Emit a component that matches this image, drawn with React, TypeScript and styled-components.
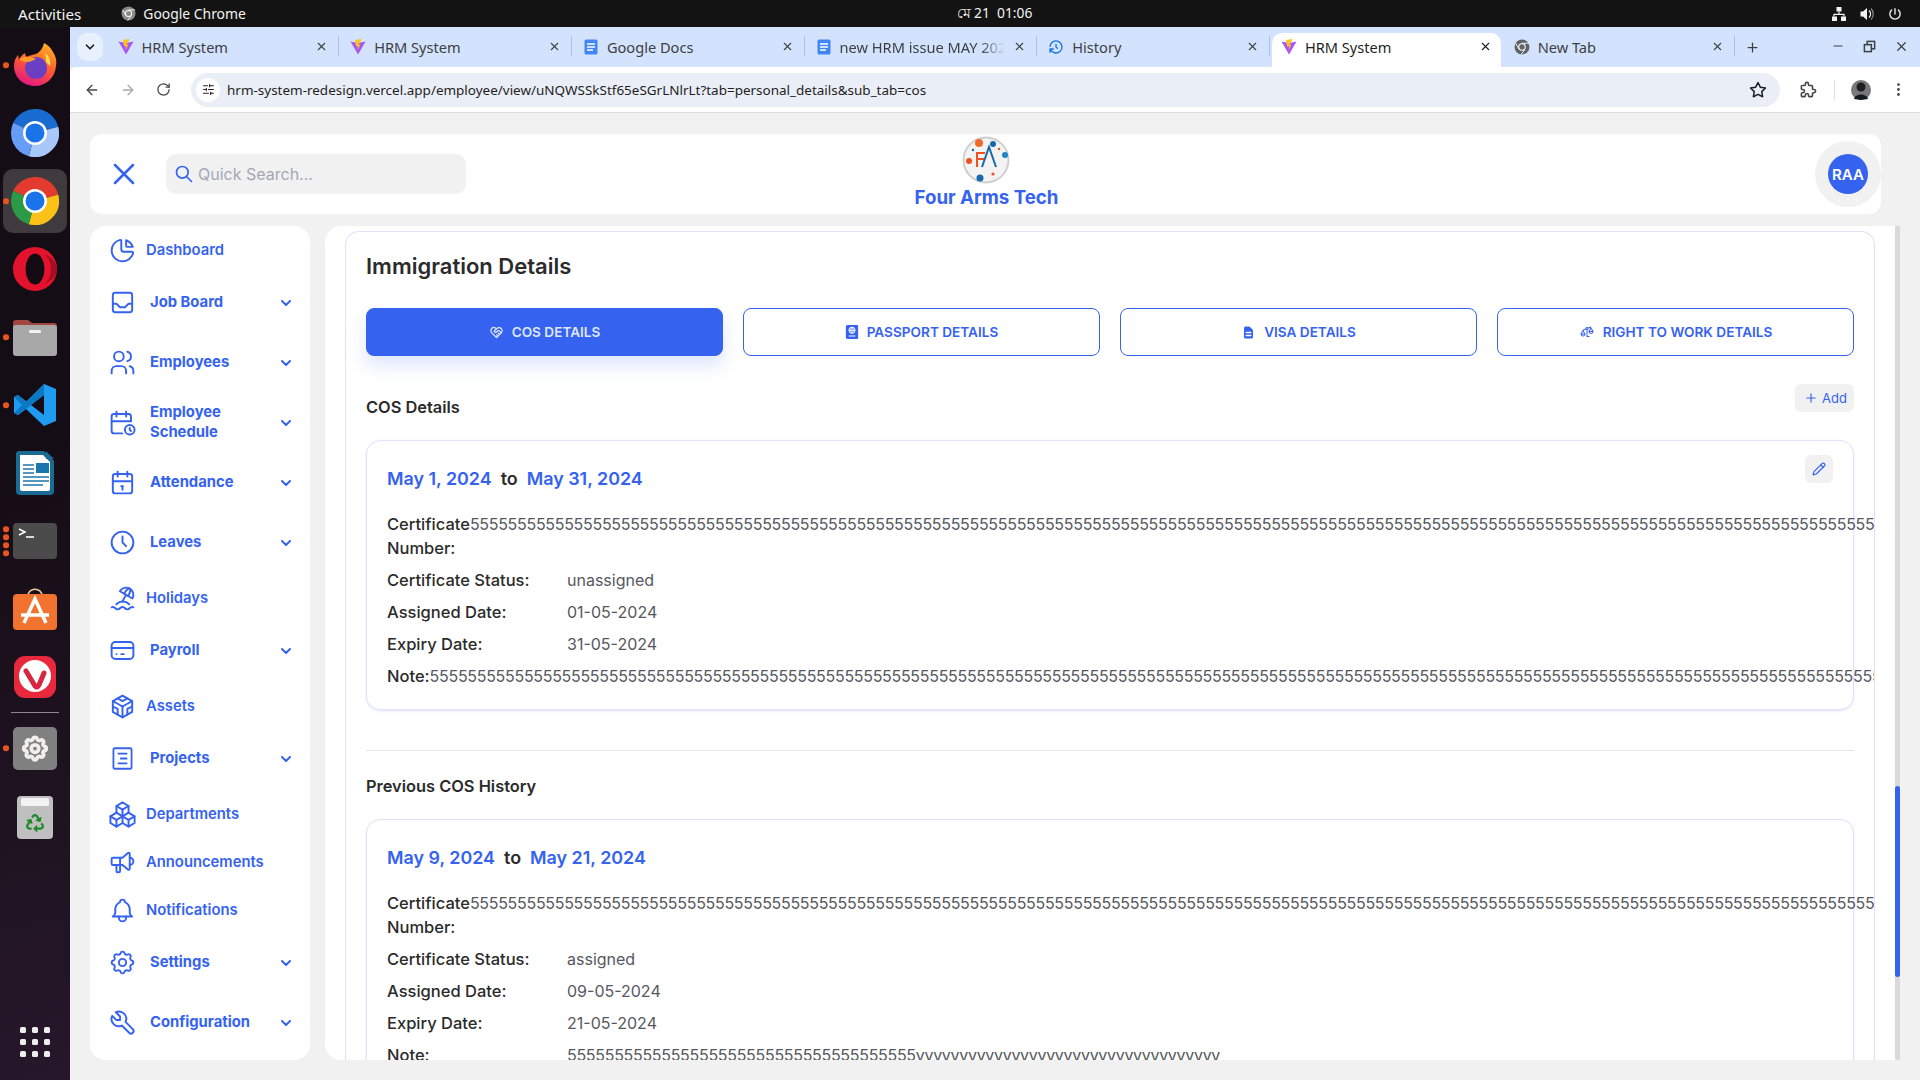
import React from 'react';
import styled, { createGlobalStyle } from 'styled-components';
import {
  TbChartPie,
  TbInbox,
  TbUsers,
  TbCalendarTime,
  TbCalendar,
  TbClock,
  TbBeach,
  TbCreditCard,
  TbBrandCodesandbox,
  TbPackages,
  TbSpeakerphone,
  TbBell,
  TbSettings,
  TbTool,
  TbSearch,
  TbHeartHandshake,
  TbPuzzle,
  TbStar,
  TbHistory,
  TbPower,
} from 'react-icons/tb';
import { FaPassport, FaRecycle } from 'react-icons/fa';
import { HiDocumentText } from 'react-icons/hi';
import { LiaBalanceScaleLeftSolid } from 'react-icons/lia';
import {
  ArrowLeft,
  ArrowRight,
  RotateCw,
  ChevronDown,
  X,
  Plus,
  Pencil,
  Minus,
  EllipsisVertical,
  SlidersHorizontal,
} from 'lucide-react';

const BLUE = '#3563f0';
const UI_FONT = '"Noto Sans", "Open Sans", sans-serif';
const APP_FONT = 'Inter, "Noto Sans", sans-serif';

const GlobalStyle = createGlobalStyle`
  html, body {
    margin: 0;
    padding: 0;
    height: 100%;
    overflow: hidden;
    background: #f1f1f1;
  }
  * {
    box-sizing: border-box;
  }
`;

const Screen = styled.div`
  width: 1920px;
  height: 1080px;
  display: flex;
  flex-direction: column;
  overflow: hidden;
`;

const TopBar = styled.div`
  height: 27px;
  flex: none;
  background: #131313;
  color: #f2f2f2;
  font-family: ${UI_FONT};
  display: flex;
  align-items: center;
  padding: 0 17px 0 18px;
  position: relative;
`;

const ActivitiesLabel = styled.span`
  font-size: 15.2px;
`;

const TopAppName = styled.div`
  display: flex;
  align-items: center;
  gap: 7px;
  margin-left: 40px;
  font-size: 13.9px;
`;

const TopClock = styled.div`
  flex: 1;
  text-align: center;
  padding-right: 88px;
  font-size: 13.8px;
`;

const TopTray = styled.div`
  display: flex;
  align-items: center;
  gap: 12px;
`;

const Desktop = styled.div`
  flex: 1;
  display: flex;
  min-height: 0;
`;

const Dock = styled.div`
  width: 70px;
  flex: none;
  padding-top: 4px;
  display: flex;
  flex-direction: column;
  background: linear-gradient(165deg, #150d15 40%, #26172a 100%);
`;

const DockSlot = styled.div<{ $h?: number; $active?: boolean }>`
  height: ${(p) => p.$h ?? 68}px;
  flex: none;
  display: flex;
  align-items: center;
  justify-content: center;
  position: relative;
  &::before {
    content: '';
    display: ${(p) => (p.$active ? 'block' : 'none')};
    position: absolute;
    left: 3px;
    right: 3px;
    top: 2px;
    bottom: 2px;
    border-radius: 10px;
    background: #3f3a3e;
  }
  svg {
    position: relative;
  }
`;

const DockDots = styled.div`
  position: absolute;
  left: 3px;
  top: 50%;
  transform: translateY(-50%);
  display: flex;
  flex-direction: column;
  gap: 2.5px;
`;

const DockDot = styled.span`
  width: 5.5px;
  height: 5.5px;
  border-radius: 50%;
  background: #e9541f;
`;

const DockSeparator = styled.div`
  height: 1px;
  flex: none;
  margin: 1px 11px 0;
  background: #8d878c;
`;

const AppsGrid = styled.div`
  margin: auto 0 23px;
  align-self: center;
  display: grid;
  grid-template-columns: repeat(3, 6px);
  gap: 6px;
  span {
    height: 6px;
    border-radius: 1.5px;
    background: #eeeeee;
  }
`;

const Browser = styled.div`
  flex: 1;
  min-width: 0;
  display: flex;
  flex-direction: column;
`;

const TabStrip = styled.div`
  height: 40px;
  flex: none;
  background: #d3e3fd;
  display: flex;
  align-items: flex-end;
  padding-left: 7px;
  font-family: ${UI_FONT};
  font-size: 14.6px;
  color: #3c4043;
  position: relative;
`;

const TabSearchButton = styled.div`
  width: 26px;
  height: 28px;
  margin: 0 3.5px 6px 0;
  flex: none;
  border-radius: 10px;
  background: #e8f0fe;
  display: flex;
  align-items: center;
  justify-content: center;
  color: #1f1f1f;
`;

const BrowserTab = styled.div<{ $active?: boolean }>`
  width: 232.7px;
  height: 34px;
  flex: none;
  display: flex;
  align-items: center;
  gap: 8px;
  padding: 0 11px 7px 11px;
  position: relative;
  color: ${(p) => (p.$active ? '#1f1f1f' : '#3c4043')};
  background: ${(p) => (p.$active ? '#ffffff' : 'transparent')};
  border-radius: ${(p) => (p.$active ? '10px 10px 0 0' : '0')};
  ${(p) => p.$active && 'margin: 0 2px; width: 228.7px; padding-left: 9px; padding-right: 9px;'}
  &::after {
    content: '';
    display: ${(p) => (p.$active ? 'none' : 'block')};
    position: absolute;
    right: 0;
    top: 3px;
    height: 20px;
    width: 1px;
    background: #a8c0ea;
  }
`;

const TabTitle = styled.span<{ $fade?: boolean }>`
  flex: 1;
  min-width: 0;
  white-space: nowrap;
  overflow: hidden;
  ${(p) =>
    p.$fade &&
    '-webkit-mask-image: linear-gradient(90deg, #000 85%, transparent 100%); mask-image: linear-gradient(90deg, #000 85%, transparent 100%);'}
`;

const NewTabPlus = styled.div`
  width: 34px;
  height: 34px;
  padding-bottom: 6px;
  display: flex;
  align-items: center;
  justify-content: center;
  color: #3c4043;
`;

const WindowControls = styled.div`
  margin-left: auto;
  height: 34px;
  padding: 0 11px 8px 0;
  display: flex;
  align-items: center;
  gap: 18px;
  color: #3c4043;
`;

const Toolbar = styled.div`
  height: 46px;
  flex: none;
  background: #ffffff;
  border-bottom: 1px solid #dddddd;
  border-radius: 8px 0 0 0;
  display: flex;
  align-items: center;
  font-family: ${UI_FONT};
  color: #474747;
`;

const NavButtons = styled.div`
  display: flex;
  align-items: center;
  gap: 20px;
  padding-left: 14px;
  width: 121px;
  flex: none;
`;

const Omnibox = styled.div`
  width: 1589px;
  height: 34px;
  flex: none;
  background: #eaeef7;
  border-radius: 17px;
  display: flex;
  align-items: center;
  padding: 0 13px 0 5px;
  font-size: 13.47px;
  color: #1f1f1f;
`;

const TuneBadge = styled.div`
  width: 24px;
  height: 24px;
  border-radius: 50%;
  background: #ffffff;
  flex: none;
  display: flex;
  align-items: center;
  justify-content: center;
  margin-right: 7px;
`;

const UrlText = styled.span`
  flex: 1;
  white-space: nowrap;
`;

const ToolbarRight = styled.div`
  display: flex;
  align-items: center;
  padding-left: 19px;
  gap: 16px;
`;

const ToolbarDivider = styled.div`
  width: 1px;
  height: 20px;
  background: #d6dfef;
`;

const ToolbarMenu = styled(EllipsisVertical)`
  margin-left: 3px;
`;

const Page = styled.div`
  flex: 1;
  min-height: 0;
  background: #f1f1f1;
  padding: 21px 0 20px 20px;
  display: flex;
  flex-direction: column;
  font-family: ${APP_FONT};
`;

const Header = styled.header`
  height: 80px;
  flex: none;
  width: 1791px;
  border-radius: 12px;
  background: #ffffff;
  display: flex;
  align-items: center;
  padding: 0 0 0 20px;
  position: relative;
`;

const CloseButton = styled.div`
  width: 28px;
  height: 28px;
  display: flex;
  align-items: center;
  justify-content: center;
  color: ${BLUE};
  svg {
    flex: none;
  }
`;

const SearchBox = styled.div`
  width: 300px;
  height: 40px;
  margin-left: 28px;
  border-radius: 10px;
  background: #f1f1f1;
  display: flex;
  align-items: center;
  gap: 4px;
  padding: 0 8px;
  color: ${BLUE};
`;

const SearchHint = styled.span`
  font-size: 16px;
  color: #a3a8b3;
  padding-bottom: 1px;
`;

const Brand = styled.div`
  position: absolute;
  left: calc(50% + 1px);
  top: 2px;
  transform: translateX(-50%);
  display: flex;
  flex-direction: column;
  align-items: center;
  gap: 3px;
  color: ${BLUE};
  font-size: 18.7px;
  font-weight: 700;
  line-height: 22px;
`;

const AvatarRing = styled.div`
  margin-left: auto;
  width: 66px;
  height: 66px;
  border-radius: 50%;
  background: #f1f1f1;
  display: flex;
  align-items: center;
  justify-content: center;
`;

const Avatar = styled.div`
  width: 40px;
  height: 40px;
  border-radius: 50%;
  background: ${BLUE};
  color: #ffffff;
  font-size: 15px;
  font-weight: 600;
  display: flex;
  align-items: center;
  justify-content: center;
`;

const Body = styled.div`
  flex: 1;
  min-height: 0;
  margin-top: 12px;
  display: flex;
  gap: 15px;
`;

const Sidebar = styled.nav`
  width: 220px;
  flex: none;
  background: #ffffff;
  border-radius: 16px;
  padding: 0 16px 0 20px;
  overflow: hidden;
  color: ${BLUE};
`;

const NavRow = styled.div<{ $expandable?: boolean }>`
  height: ${(p) => (p.$expandable ? 60 : 48)}px;
  padding-top: ${(p) => (p.$expandable ? 0 : 4)}px;
  display: flex;
  align-items: center;
  &:first-child {
    margin-top: -2px;
  }
`;

const NavIcon = styled.div`
  width: 24px;
  height: 24px;
  flex: none;
  display: flex;
  align-items: center;
  justify-content: center;
  svg {
    flex: none;
  }
`;

const NavLabel = styled.span<{ $expandable?: boolean }>`
  flex: 1;
  margin-left: ${(p) => (p.$expandable ? 16 : 12)}px;
  font-size: 14.8px;
  line-height: 20px;
  font-weight: ${(p) => (p.$expandable ? 700 : 600)};
`;

const NavChevron = styled(ChevronDown)`
  flex: none;
  margin-top: 2px;
`;

const Main = styled.main`
  width: 1575px;
  flex: none;
  display: flex;
  min-height: 0;
`;

const MainScroll = styled.div`
  flex: 1;
  min-width: 0;
  background: #ffffff;
  border-radius: 16px 0 0 16px;
  padding: 5px 20px 0;
  overflow: hidden;
`;

const ScrollTrack = styled.div`
  width: 5px;
  flex: none;
  background: #d9d9d9;
  border-radius: 0 0 3px 3px;
  padding-top: 560px;
`;

const ScrollThumb = styled.div`
  height: 191px;
  background: ${BLUE};
  border-radius: 3px;
`;

const Panel = styled.section`
  border: 1px solid #e2e0fb;
  border-bottom: none;
  border-radius: 14px 14px 0 0;
  height: 900px;
  padding: 19px 20px 0;
  overflow: hidden;
  color: #2b2b2b;
`;

const PanelTitle = styled.h2`
  margin: 0;
  font-size: 22px;
  line-height: 30px;
  font-weight: 600;
`;

const TabRow = styled.div`
  margin-top: 27px;
  display: grid;
  grid-template-columns: repeat(4, 357px);
  gap: 20px;
`;

const DetailTab = styled.button<{ $active?: boolean }>`
  height: 48px;
  border-radius: 8px;
  border: 1px solid ${BLUE};
  background: ${(p) => (p.$active ? BLUE : '#ffffff')};
  color: ${(p) => (p.$active ? '#dfe6fd' : BLUE)};
  box-shadow: ${(p) => (p.$active ? '0 10px 18px rgba(53, 99, 240, 0.16)' : 'none')};
  font-family: ${APP_FONT};
  font-size: 13.6px;
  font-weight: 600;
  display: flex;
  align-items: center;
  justify-content: center;
  gap: 8px;
  padding: 0;
`;

const SectionHead = styled.div`
  margin-top: 28px;
  height: 35px;
  display: flex;
  justify-content: space-between;
  align-items: flex-start;
`;

const SectionTitle = styled.h3<{ $flush?: boolean }>`
  margin: ${(p) => (p.$flush ? '23px 0 0' : '11px 0 0')};
  font-size: 16.4px;
  line-height: 24px;
  font-weight: 600;
`;

const SoftButton = styled.button`
  height: 28px;
  padding: 0 7px 0 9px;
  border: none;
  border-radius: 6px;
  background: #f1f1f1;
  color: ${BLUE};
  font-family: ${APP_FONT};
  font-size: 13px;
  font-weight: 400;
  display: flex;
  align-items: center;
  gap: 4px;
`;

const RecordCard = styled.article`
  margin-top: 21px;
  width: 1488px;
  padding: 24px 20px 21px;
  border: 1px solid #e2e0fb;
  border-radius: 14px;
  box-shadow: 0 1px 2px rgba(80, 70, 220, 0.18);
  position: relative;
`;

const EditButton = styled.button`
  position: absolute;
  top: 14px;
  right: 20px;
  width: 28px;
  height: 28px;
  border: none;
  border-radius: 6px;
  background: #f1f1f1;
  color: ${BLUE};
  display: flex;
  align-items: center;
  justify-content: center;
  padding: 0;
`;

const DateLine = styled.div`
  font-size: 17.9px;
  line-height: 28px;
  font-weight: 600;
  display: flex;
  gap: 9px;
  margin-bottom: 19px;
`;

const DateValue = styled.span`
  color: ${BLUE};
`;

const FieldRow = styled.div`
  display: flex;
  font-size: 16.5px;
  line-height: 24px;
  & + & {
    margin-top: 8px;
  }
`;

const FieldLabel = styled.span`
  flex: 0 1 180px;
  font-weight: 500;
`;

const FieldValue = styled.span<{ $tight?: boolean }>`
  flex: none;
  color: #55585e;
  font-size: 16px;
  letter-spacing: ${(p) => (p.$tight ? '-0.3px' : '0')};
`;

const Divider = styled.hr`
  margin: 40px 0 0;
  width: 1488px;
  border: none;
  border-top: 1px solid #e6e6e6;
`;

const ViteIcon = () => (
  <svg width="16" height="16" viewBox="0 0 16 16">
    <path d="M0.5 2.5 8 15.5 15.5 2.5 8 4Z" fill="#a855f7" />
    <path d="M5 1 11.5 0 8.5 6 10.5 5.5 7.5 11 8 7 6 7.5Z" fill="#fdc417" />
  </svg>
);

const DocsIcon = () => (
  <svg width="16" height="16" viewBox="0 0 16 16">
    <rect x="1.5" y="0.5" width="13" height="15" rx="1.5" fill="#4285f4" />
    <path d="M4 5h8M4 8h8M4 11h6" stroke="#fff" strokeWidth="1.4" />
  </svg>
);

const ChromeGreyIcon = ({ size = 16, color = '#5f6368' }: { size?: number; color?: string }) => (
  <svg width={size} height={size} viewBox="0 0 16 16">
    <circle cx="8" cy="8" r="7.5" fill={color} />
    <circle cx="8" cy="8" r="3.8" fill="#fff" />
    <circle cx="8" cy="8" r="2.7" fill={color} />
    <path d="M8 4.2h7M5 10 1.6 4M10.6 11 7 15.5" stroke="#fff" strokeWidth="0.9" />
  </svg>
);

const NetworkTrayIcon = () => (
  <svg width="16" height="16" viewBox="0 0 16 16" fill="#f2f2f2">
    <rect x="5.5" y="1" width="5" height="4.5" />
    <rect x="1" y="10.5" width="5" height="4.5" />
    <rect x="10" y="10.5" width="5" height="4.5" />
    <path d="M7.4 5.5h1.2v2.2h5v2.8h-1.2V8.9H3.6v1.6H2.4V7.7h5Z" />
  </svg>
);

const SpeakerTrayIcon = () => (
  <svg width="16" height="16" viewBox="0 0 16 16" fill="#f2f2f2">
    <path d="M1.5 5.5H4L8 2v12l-4-3.5H1.5Z" />
    <path d="M10 4.5c2 2 2 5 0 7" stroke="#f2f2f2" strokeWidth="1.4" fill="none" />
    <path d="M12 2.5c3 3 3 8 0 11" stroke="#8a8a8a" strokeWidth="1.2" fill="none" />
  </svg>
);

const ChromeLogo = ({ colors }: { colors: [string, string, string, string] }) => (
  <svg width="48" height="48" viewBox="0 0 48 48">
    <path d="M24 24L2.25 13.85A24 24 0 0 1 47.2 17.8Z" fill={colors[0]} />
    <path d="M24 24L47.2 17.8A24 24 0 0 1 17.8 47.2Z" fill={colors[1]} />
    <path d="M24 24L17.8 47.2A24 24 0 0 1 2.25 13.85Z" fill={colors[2]} />
    <circle cx="24" cy="24" r="12" fill="#fff" />
    <circle cx="24" cy="24" r="9.5" fill={colors[3]} />
  </svg>
);

const FirefoxIcon = () => (
  <svg width="44" height="44" viewBox="0 0 44 44">
    <defs>
      <linearGradient id="ffBody" x1="0.7" y1="0" x2="0.3" y2="1">
        <stop offset="0" stopColor="#ffb021" />
        <stop offset="0.5" stopColor="#ff5a30" />
        <stop offset="1" stopColor="#e31587" />
      </linearGradient>
    </defs>
    <path
      d="M40 9c3 5 4 9 3 14-1 12-10 20-21 20C10 43 1 34 1 23c0-4 1-8 4-11l1 5c1-3 3-5 6-7 0 2 1 3 2 4 3-2 6-2 9-3 4-2 7-6 8-11 4 2 7 5 9 9Z"
      fill="url(#ffBody)"
    />
    <circle cx="23" cy="25" r="11" fill="#6b3fc4" />
    <path d="M6 16c5-3 12-3 17 0-3 1-5 3-9 3-3 0-6-1-8-3Z" fill="#ff9a2b" />
    <path d="M32 10c4 3 6 8 5 13l-4-4c0-3 0-6-1-9Z" fill="#ffe14d" />
  </svg>
);

const OperaIcon = () => (
  <svg width="44" height="44" viewBox="0 0 44 44">
    <circle cx="22" cy="22" r="22" fill="#e3122d" />
    <ellipse cx="22" cy="22" rx="9.5" ry="15.5" fill="#150c13" />
    <path d="M31 7c8 3 13 9 13 15s-5 12-13 15c5-3 7-9 7-15s-2-12-7-15Z" fill="#a70d22" />
  </svg>
);

const FilesIcon = () => (
  <svg width="44" height="44" viewBox="0 0 44 44">
    <path d="M0 8a3 3 0 0 1 3-3h12l4 3h22a3 3 0 0 1 3 3v10H0Z" fill="#a0483f" />
    <rect x="0" y="10" width="44" height="31" rx="3" fill="#a8a8a8" />
    <rect x="16" y="15" width="12" height="3" rx="1" fill="#f2f2f2" />
  </svg>
);

const VSCodeIcon = () => (
  <svg width="42" height="42" viewBox="0 0 42 42">
    <path d="M30 0 42 5v32l-12 5-18-17L4 31l-4-2V13l4-2 26 20V11L14 23l-3-4Z" fill="#1f9cf0" />
    <path d="M30 0v11L12 25 4 31l-4-2 8-8-8-8 4-2 8 7Z" fill="#0a78c2" />
  </svg>
);

const WriterIcon = () => (
  <svg width="38" height="44" viewBox="0 0 38 44">
    <path d="M2 0h26l10 10v30a4 4 0 0 1-4 4H4a4 4 0 0 1-4-4V2Z" fill="#1b6a94" />
    <path d="M4 4h23l7 7v27a2 2 0 0 1-2 2H6a2 2 0 0 1-2-2Z" fill="#ffffff" />
    <rect x="20" y="12" width="13" height="10" fill="#1b76ab" />
    <path d="M7 14h11M7 18h11M7 22h11M7 26h26M7 30h26M7 34h20" stroke="#1b76ab" strokeWidth="1.6" />
    <path d="M30 0l8 8h-8Z" fill="#1b6a94" />
  </svg>
);

const TerminalIcon = () => (
  <svg width="44" height="36" viewBox="0 0 44 36">
    <rect width="44" height="36" rx="4" fill="#4b4b4b" />
    <path d="M6 6l6 3-6 3" stroke="#fff" strokeWidth="1.5" fill="none" />
    <path d="M13 14h8" stroke="#fff" strokeWidth="1.6" />
  </svg>
);

const SoftwareIcon = () => (
  <svg width="44" height="42" viewBox="0 0 44 42">
    <path d="M15 8c0-9 14-9 14 0" stroke="#f0c993" strokeWidth="1.5" fill="none" />
    <rect y="6" width="44" height="36" rx="4" fill="#f27230" />
    <path d="M11 35 22 11l11 24M8 27h28" stroke="#fff" strokeWidth="3.5" fill="none" />
  </svg>
);

const VivaldiIcon = () => (
  <svg width="42" height="42" viewBox="0 0 42 42">
    <rect width="42" height="42" rx="11" fill="#e8283c" />
    <circle cx="21" cy="20" r="16" fill="#fff" />
    <path d="M12 15l9 15c2 2 3 1 4-1l5-12" stroke="#d7263d" strokeWidth="5" fill="none" strokeLinecap="round" />
  </svg>
);

const SettingsIcon = () => (
  <svg width="44" height="43" viewBox="0 0 44 43">
    <rect width="44" height="43" rx="5" fill="#808080" />
    <g transform="translate(7 6.5)">
      <TbSettings size={30} color="#f1efea" strokeWidth={3} />
    </g>
  </svg>
);

const TrashIcon = () => (
  <svg width="36" height="43" viewBox="0 0 36 43">
    <rect width="36" height="43" rx="4" fill="#bfbfbf" />
    <rect x="4" y="2" width="28" height="8" rx="1.5" fill="#f2f2f2" />
    <g transform="translate(9 18)">
      <FaRecycle size={18} color="#1f8a2a" />
    </g>
  </svg>
);

const FourArmsLogo = () => (
  <svg width="48" height="48" viewBox="0 0 48 48">
    <circle cx="24" cy="24" r="23.5" fill="#cfcfcf" />
    <circle cx="24" cy="24" r="21.5" fill="#f3f3f3" />
    <circle cx="17" cy="7" r="4" fill="#f06a2b" />
    <circle cx="31" cy="8" r="3" fill="#1769aa" />
    <circle cx="7" cy="25" r="3" fill="#f0501f" />
    <circle cx="43" cy="19" r="3" fill="#1d86c4" />
    <circle cx="18" cy="42" r="3.5" fill="#1769aa" />
    <circle cx="31" cy="38" r="1.6" fill="#f0501f" />
    <circle cx="37" cy="13" r="1.2" fill="#f0501f" />
    <circle cx="11" cy="14" r="1.2" fill="#1769aa" />
    <path d="M15 31V17h8M15 23h7" stroke="#f0501f" strokeWidth="2" fill="none" />
    <path d="M20 31l7-20 7 20" stroke="#1769aa" strokeWidth="2" fill="none" />
  </svg>
);

const ProjectsIcon = ({ size }: { size: number; strokeWidth?: number }) => (
  <svg width={size} height={size} viewBox="0 0 24 24" fill="none" stroke="currentColor" strokeWidth="1.5">
    <rect x="4.5" y="3.5" width="15" height="17" rx="1" />
    <path d="M8 8h8M10 12h6M8 16h8" />
  </svg>
);

const dockItems = [
  { icon: <FirefoxIcon />, dots: 1 },
  { icon: <ChromeLogo colors={['#1a6bd0', '#a8c7fa', '#669df6', '#1a73e8']} />, dots: 0 },
  { icon: <ChromeLogo colors={['#e33b2e', '#fbc116', '#2a9a46', '#1a73e8']} />, dots: 1, active: true },
  { icon: <OperaIcon />, dots: 0 },
  { icon: <FilesIcon />, dots: 1 },
  { icon: <VSCodeIcon />, dots: 1 },
  { icon: <WriterIcon />, dots: 0 },
  { icon: <TerminalIcon />, dots: 4 },
  { icon: <SoftwareIcon />, dots: 0 },
  { icon: <VivaldiIcon />, dots: 0 },
];

const browserTabs = [
  { title: 'HRM System', icon: <ViteIcon /> },
  { title: 'HRM System', icon: <ViteIcon /> },
  { title: 'Google Docs', icon: <DocsIcon /> },
  { title: 'new HRM issue MAY 2024', icon: <DocsIcon />, fade: true },
  { title: 'History', icon: <TbHistory size={16} color="#1a73e8" /> },
  { title: 'HRM System', icon: <ViteIcon />, active: true },
  { title: 'New Tab', icon: <ChromeGreyIcon /> },
];

const navItems = [
  { label: 'Dashboard', Icon: TbChartPie },
  { label: 'Job Board', Icon: TbInbox, expandable: true },
  { label: 'Employees', Icon: TbUsers, expandable: true },
  { label: 'Employee Schedule', Icon: TbCalendarTime, expandable: true },
  { label: 'Attendance', Icon: TbCalendar, expandable: true },
  { label: 'Leaves', Icon: TbClock, expandable: true },
  { label: 'Holidays', Icon: TbBeach },
  { label: 'Payroll', Icon: TbCreditCard, expandable: true },
  { label: 'Assets', Icon: TbBrandCodesandbox },
  { label: 'Projects', Icon: ProjectsIcon, expandable: true },
  { label: 'Departments', Icon: TbPackages },
  { label: 'Announcements', Icon: TbSpeakerphone },
  { label: 'Notifications', Icon: TbBell },
  { label: 'Settings', Icon: TbSettings, expandable: true },
  { label: 'Configuration', Icon: TbTool, expandable: true },
];

const detailTabs = [
  { label: 'COS DETAILS', icon: <TbHeartHandshake size={15} />, active: true },
  { label: 'PASSPORT DETAILS', icon: <FaPassport size={14} /> },
  { label: 'VISA DETAILS', icon: <HiDocumentText size={15} /> },
  { label: 'RIGHT TO WORK DETAILS', icon: <LiaBalanceScaleLeftSolid size={16} /> },
];

const longNumber = '5'.repeat(260);

const DockPanel = () => (
  <Dock>
    {dockItems.map((item, i) => (
      <DockSlot key={i} $active={item.active}>
        {item.dots > 0 && (
          <DockDots>
            {Array.from({ length: item.dots }).map((_, d) => (
              <DockDot key={d} />
            ))}
          </DockDots>
        )}
        {item.icon}
      </DockSlot>
    ))}
    <DockSeparator />
    <DockSlot $h={70}>
      <DockDots>
        <DockDot />
      </DockDots>
      <SettingsIcon />
    </DockSlot>
    <DockSlot>
      <TrashIcon />
    </DockSlot>
    <AppsGrid>
      {Array.from({ length: 9 }).map((_, i) => (
        <span key={i} />
      ))}
    </AppsGrid>
  </Dock>
);

const BrowserChrome = () => (
  <>
    <TabStrip>
      <TabSearchButton>
        <ChevronDown size={14} strokeWidth={3} />
      </TabSearchButton>
      {browserTabs.map((tab, i) => (
        <BrowserTab key={i} $active={tab.active}>
          {tab.icon}
          <TabTitle $fade={tab.fade}>{tab.title}</TabTitle>
          <X size={13} />
        </BrowserTab>
      ))}
      <NewTabPlus>
        <Plus size={15} />
      </NewTabPlus>
      <WindowControls>
        <Minus size={14} />
        <svg width="13" height="13" viewBox="0 0 14 14" fill="none" stroke="currentColor" strokeWidth="1.6">
          <rect x="4.5" y="1.5" width="8" height="8" />
          <rect x="1.5" y="5" width="7.5" height="7.5" fill="#d3e3fd" />
        </svg>
        <X size={15} />
      </WindowControls>
    </TabStrip>
    <Toolbar>
      <NavButtons>
        <ArrowLeft size={16} />
        <ArrowRight size={16} color="#a9a9a9" />
        <RotateCw size={15} />
      </NavButtons>
      <Omnibox>
        <TuneBadge>
          <SlidersHorizontal size={13} />
        </TuneBadge>
        <UrlText>hrm-system-redesign.vercel.app/employee/view/uNQWSSkStf65eSGrLNlrLt?tab=personal_details&amp;sub_tab=cos</UrlText>
        <TbStar size={18} />
      </Omnibox>
      <ToolbarRight>
        <TbPuzzle size={19} />
        <ToolbarDivider />
        <svg width="20" height="20" viewBox="0 0 20 20">
          <circle cx="10" cy="10" r="10" fill="#77797c" />
          <path d="M3 19c1-6 13-6 14 0l-7 1Z" fill="#141a22" />
          <circle cx="10" cy="7" r="4.5" fill="#231f20" />
        </svg>
        <ToolbarMenu size={17} />
      </ToolbarRight>
    </Toolbar>
  </>
);

const Record = ({
  from,
  to,
  number,
  status,
  assigned,
  expiry,
  note,
  editable,
}: {
  from: string;
  to: string;
  number: string;
  status: string;
  assigned: string;
  expiry: string;
  note: string;
  editable?: boolean;
}) => (
  <RecordCard>
    {editable && (
      <EditButton>
        <Pencil size={14} />
      </EditButton>
    )}
    <DateLine>
      <DateValue>{from}</DateValue>
      <span>to</span>
      <DateValue>{to}</DateValue>
    </DateLine>
    <FieldRow>
      <FieldLabel>Certificate Number:</FieldLabel>
      <FieldValue $tight>{number}</FieldValue>
    </FieldRow>
    <FieldRow>
      <FieldLabel>Certificate Status:</FieldLabel>
      <FieldValue>{status}</FieldValue>
    </FieldRow>
    <FieldRow>
      <FieldLabel>Assigned Date:</FieldLabel>
      <FieldValue>{assigned}</FieldValue>
    </FieldRow>
    <FieldRow>
      <FieldLabel>Expiry Date:</FieldLabel>
      <FieldValue>{expiry}</FieldValue>
    </FieldRow>
    <FieldRow>
      <FieldLabel>Note:</FieldLabel>
      <FieldValue $tight>{note}</FieldValue>
    </FieldRow>
  </RecordCard>
);

const App = () => (
  <Screen>
    <GlobalStyle />
    <TopBar>
      <ActivitiesLabel>Activities</ActivitiesLabel>
      <TopAppName>
        <ChromeGreyIcon size={15} color="#8a8a8a" />
        <span>Google Chrome</span>
      </TopAppName>
      <TopClock>মে 21&nbsp;&nbsp;01:06</TopClock>
      <TopTray>
        <NetworkTrayIcon />
        <SpeakerTrayIcon />
        <TbPower size={16} />
      </TopTray>
    </TopBar>
    <Desktop>
      <DockPanel />
      <Browser>
        <BrowserChrome />
        <Page>
          <Header>
            <CloseButton>
              <X size={36} strokeWidth={1.7} />
            </CloseButton>
            <SearchBox>
              <TbSearch size={20} />
              <SearchHint>Quick Search...</SearchHint>
            </SearchBox>
            <Brand>
              <FourArmsLogo />
              <span>Four Arms Tech</span>
            </Brand>
            <AvatarRing>
              <Avatar>RAA</Avatar>
            </AvatarRing>
          </Header>
          <Body>
            <Sidebar>
              {navItems.map(({ label, Icon, expandable }) => (
                <NavRow key={label} $expandable={expandable}>
                  <NavIcon>
                    <Icon size={29} strokeWidth={1.6} />
                  </NavIcon>
                  <NavLabel $expandable={expandable}>{label}</NavLabel>
                  {expandable && <NavChevron size={16} strokeWidth={3} />}
                </NavRow>
              ))}
            </Sidebar>
            <Main>
              <MainScroll>
                <Panel>
                  <PanelTitle>Immigration Details</PanelTitle>
                  <TabRow>
                    {detailTabs.map((tab) => (
                      <DetailTab key={tab.label} $active={tab.active}>
                        {tab.icon}
                        {tab.label}
                      </DetailTab>
                    ))}
                  </TabRow>
                  <SectionHead>
                    <SectionTitle>COS Details</SectionTitle>
                    <SoftButton>
                      <Plus size={14} />
                      Add
                    </SoftButton>
                  </SectionHead>
                  <Record
                    editable
                    from="May 1, 2024"
                    to="May 31, 2024"
                    number={longNumber}
                    status="unassigned"
                    assigned="01-05-2024"
                    expiry="31-05-2024"
                    note={longNumber}
                  />
                  <Divider />
                  <SectionTitle $flush>Previous COS History</SectionTitle>
                  <Record
                    from="May 9, 2024"
                    to="May 21, 2024"
                    number={longNumber}
                    status="assigned"
                    assigned="09-05-2024"
                    expiry="21-05-2024"
                    note={'5'.repeat(37) + 'v'.repeat(35)}
                  />
                </Panel>
              </MainScroll>
              <ScrollTrack>
                <ScrollThumb />
              </ScrollTrack>
            </Main>
          </Body>
        </Page>
      </Browser>
    </Desktop>
  </Screen>
);

export default App;
